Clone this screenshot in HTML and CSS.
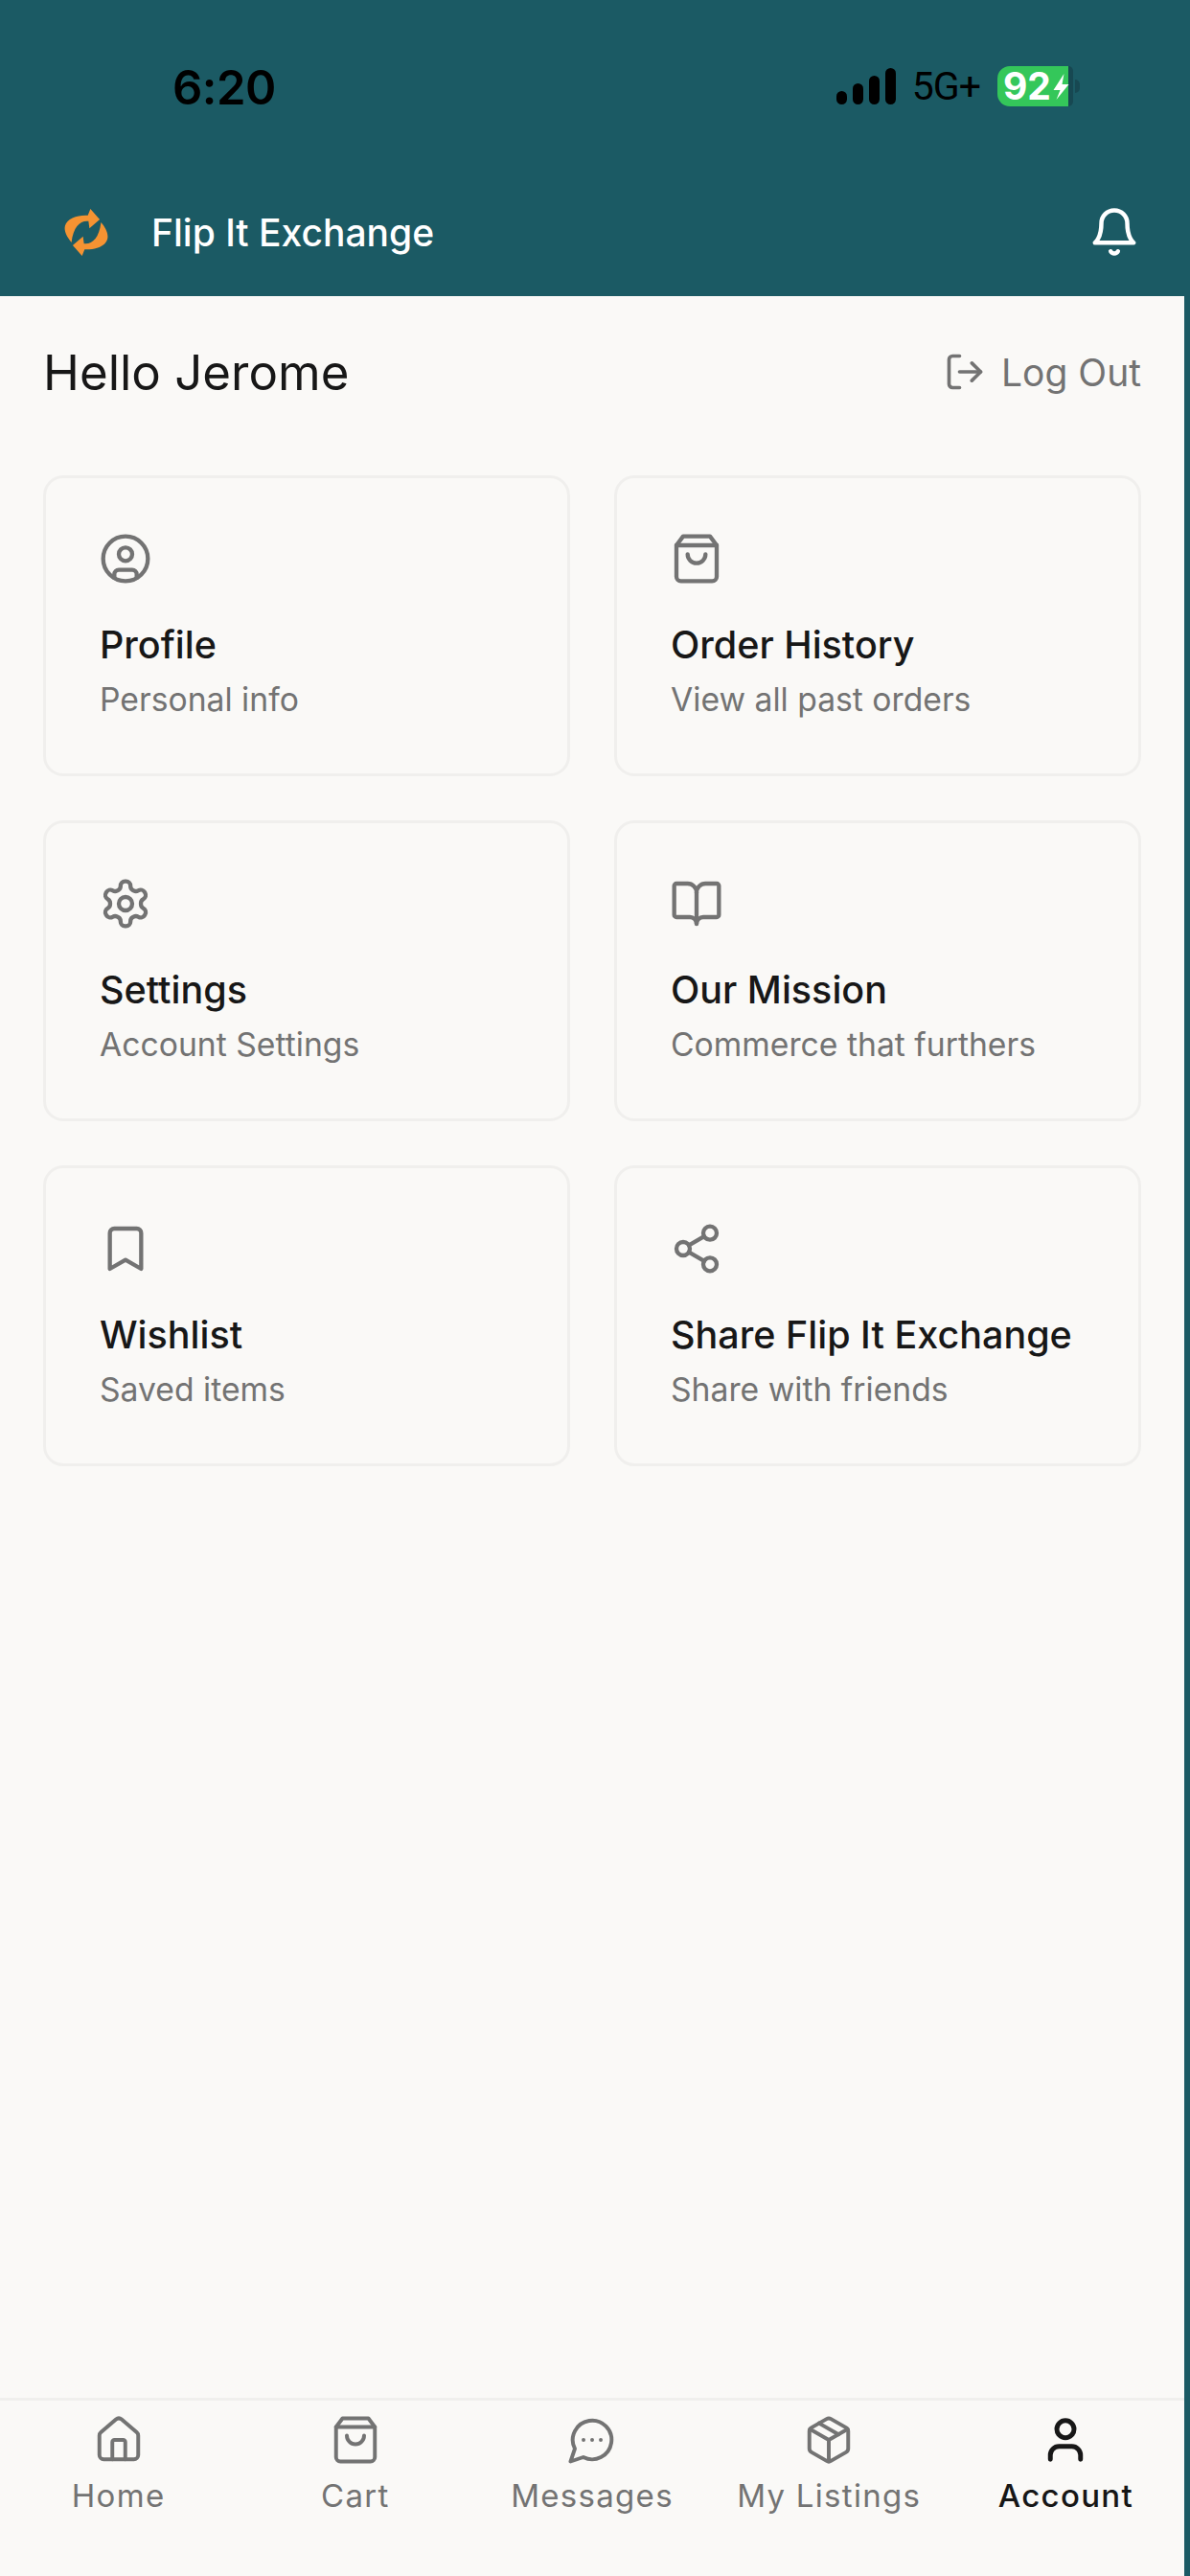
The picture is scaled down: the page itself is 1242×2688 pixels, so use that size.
FILE: index.html
```html
<!DOCTYPE html>
<html>
<head>
    <meta charset="utf-8">
    <title>Flip It Exchange</title>
    <link rel="stylesheet" href="styles.css">
</head>
<body>
    <div class="app">
        <header class="header">
            <div class="status-bar">
                <span class="time">6:20</span>
                <div class="status-right">
                    <div class="signal">
                        <div class="signal-bar signal-1"></div>
                        <div class="signal-bar signal-2"></div>
                        <div class="signal-bar signal-3"></div>
                        <div class="signal-bar signal-4"></div>
                    </div>
                    <span class="network">5G+</span>
                    <div class="battery">
                        <div class="battery-fill">92</div>
                        <div class="battery-rest"></div>
                        <div class="battery-nub"></div>
                        <svg class="battery-bolt" viewBox="0 0 16 28"><polygon points="11,0 0,17 7,17 3,27 16,11 9,11"/></svg>
                    </div>
                </div>
            </div>
            <div class="toolbar">
                <div class="brand">
                    <svg class="logo" viewBox="70 70 160 170">
                        <path d="M163 82 L192 115 L160 142 L157 120 C132 117 110 136 104 186 C90 170 80 150 84 135 C90 110 125 100 155 102 Z"/>
                        <path transform="rotate(180 150 155)" d="M163 82 L192 115 L160 142 L157 120 C132 117 110 136 104 186 C90 170 80 150 84 135 C90 110 125 100 155 102 Z"/>
                    </svg>
                    <span class="brand-name">Flip It Exchange</span>
                </div>
                <svg class="bell" viewBox="0 0 24 24"><path d="M6 8a6 6 0 0 1 12 0c0 7 3 9 3 9H3s3-2 3-9"/><path d="M10.3 21a1.94 1.94 0 0 0 3.4 0"/></svg>
            </div>
        </header>

        <main class="content">
            <div class="greeting-row">
                <h1 class="greeting">Hello Jerome</h1>
                <div class="logout">
                    <svg class="logout-icon" viewBox="0 0 24 24"><path d="M9 21H5a2 2 0 0 1-2-2V5a2 2 0 0 1 2-2h4"/><polyline points="16 17 21 12 16 7"/><line x1="21" y1="12" x2="9" y2="12"/></svg>
                    <span>Log Out</span>
                </div>
            </div>

            <div class="card-grid">
                <div class="card">
                    <svg class="card-icon" viewBox="0 0 24 24"><circle cx="12" cy="12" r="10"/><circle cx="12" cy="10" r="3"/><path d="M7 20.662V19a2 2 0 0 1 2-2h6a2 2 0 0 1 2 2v1.662"/></svg>
                    <div class="card-title">Profile</div>
                    <div class="card-sub">Personal info</div>
                </div>
                <div class="card">
                    <svg class="card-icon" viewBox="0 0 24 24"><path d="M6 2 3 6v14a2 2 0 0 0 2 2h14a2 2 0 0 0 2-2V6l-3-4Z"/><path d="M3 6h18"/><path d="M16 10a4 4 0 0 1-8 0"/></svg>
                    <div class="card-title">Order History</div>
                    <div class="card-sub">View all past orders</div>
                </div>
                <div class="card">
                    <svg class="card-icon" viewBox="0 0 24 24"><path d="M12.22 2h-.44a2 2 0 0 0-2 2v.18a2 2 0 0 1-1 1.73l-.43.25a2 2 0 0 1-2 0l-.15-.08a2 2 0 0 0-2.73.73l-.22.38a2 2 0 0 0 .73 2.73l.15.1a2 2 0 0 1 1 1.72v.51a2 2 0 0 1-1 1.74l-.15.09a2 2 0 0 0-.73 2.73l.22.38a2 2 0 0 0 2.73.73l.15-.08a2 2 0 0 1 2 0l.43.25a2 2 0 0 1 1 1.73V20a2 2 0 0 0 2 2h.44a2 2 0 0 0 2-2v-.18a2 2 0 0 1 1-1.73l.43-.25a2 2 0 0 1 2 0l.15.08a2 2 0 0 0 2.73-.73l.22-.39a2 2 0 0 0-.73-2.73l-.15-.08a2 2 0 0 1-1-1.74v-.5a2 2 0 0 1 1-1.74l.15-.09a2 2 0 0 0 .73-2.73l-.22-.38a2 2 0 0 0-2.73-.73l-.15.08a2 2 0 0 1-2 0l-.43-.25a2 2 0 0 1-1-1.73V4a2 2 0 0 0-2-2z"/><circle cx="12" cy="12" r="3"/></svg>
                    <div class="card-title">Settings</div>
                    <div class="card-sub">Account Settings</div>
                </div>
                <div class="card">
                    <svg class="card-icon" viewBox="0 0 24 24"><path d="M12 7v14"/><path d="M3 18a1 1 0 0 1-1-1V4a1 1 0 0 1 1-1h5a4 4 0 0 1 4 4 4 4 0 0 1 4-4h5a1 1 0 0 1 1 1v13a1 1 0 0 1-1 1h-6a3 3 0 0 0-3 3 3 3 0 0 0-3-3z"/></svg>
                    <div class="card-title">Our Mission</div>
                    <div class="card-sub">Commerce that furthers</div>
                </div>
                <div class="card">
                    <svg class="card-icon" viewBox="0 0 24 24"><path d="m19 21-7-4-7 4V5a2 2 0 0 1 2-2h10a2 2 0 0 1 2 2v16z"/></svg>
                    <div class="card-title">Wishlist</div>
                    <div class="card-sub">Saved items</div>
                </div>
                <div class="card">
                    <svg class="card-icon" viewBox="0 0 24 24"><circle cx="18" cy="5" r="3"/><circle cx="6" cy="12" r="3"/><circle cx="18" cy="19" r="3"/><line x1="8.59" y1="13.51" x2="15.42" y2="17.49"/><line x1="15.41" y1="6.51" x2="8.59" y2="10.49"/></svg>
                    <div class="card-title">Share Flip It Exchange</div>
                    <div class="card-sub">Share with friends</div>
                </div>
            </div>
        </main>

        <nav class="tab-bar">
            <div class="tab">
                <svg class="tab-icon" viewBox="0 0 24 24"><path d="M15 21v-8a1 1 0 0 0-1-1h-4a1 1 0 0 0-1 1v8"/><path d="M3 10a2 2 0 0 1 .709-1.528l7-5.999a2 2 0 0 1 2.582 0l7 5.999A2 2 0 0 1 21 10v9a2 2 0 0 1-2 2H5a2 2 0 0 1-2-2z"/></svg>
                <span>Home</span>
            </div>
            <div class="tab">
                <svg class="tab-icon" viewBox="0 0 24 24"><path d="M6 2 3 6v14a2 2 0 0 0 2 2h14a2 2 0 0 0 2-2V6l-3-4Z"/><path d="M3 6h18"/><path d="M16 10a4 4 0 0 1-8 0"/></svg>
                <span>Cart</span>
            </div>
            <div class="tab">
                <svg class="tab-icon" viewBox="0 0 24 24"><path d="M7.9 20A9 9 0 1 0 4 16.1L2 22Z"/><path d="M8 12h.01"/><path d="M12 12h.01"/><path d="M16 12h.01"/></svg>
                <span>Messages</span>
            </div>
            <div class="tab">
                <svg class="tab-icon" viewBox="0 0 24 24"><path d="M11 21.73a2 2 0 0 0 2 0l7-4A2 2 0 0 0 21 16V8a2 2 0 0 0-1-1.73l-7-4a2 2 0 0 0-2 0l-7 4A2 2 0 0 0 3 8v8a2 2 0 0 0 1 1.73z"/><path d="M12 22V12"/><path d="M3.29 7 12 12l8.71-5"/><path d="m7.5 4.27 9 5.15"/></svg>
                <span>My Listings</span>
            </div>
            <div class="tab tab-active">
                <svg class="tab-icon" viewBox="0 0 24 24"><path d="M19 21v-2a4 4 0 0 0-4-4H9a4 4 0 0 0-4 4v2"/><circle cx="12" cy="7" r="4"/></svg>
                <span>Account</span>
            </div>
        </nav>
    </div>
</body>
</html>
```
FILE: styles.css
```css
* {
    box-sizing: border-box;
}

body {
    margin: 0;
    background: #1b5a64;
    font-family: Inter, "Liberation Sans", sans-serif;
}

.app {
    display: flex;
    flex-direction: column;
    width: 1236px;
    height: 2688px;
    background: #faf9f7;
}

svg {
    flex-shrink: 0;
    fill: none;
    stroke: currentColor;
    stroke-linecap: round;
    stroke-linejoin: round;
}

/* Header */
.header {
    height: 309px;
    background: #1b5a64;
    color: #fff;
}

.status-bar {
    display: flex;
    align-items: center;
    justify-content: space-between;
    height: 180px;
    padding: 0 109px 0 180px;
    color: #000;
}

.time {
    margin-top: 3px;
    font-size: 49px;
    font-weight: 600;
    letter-spacing: -0.5px;
}

.status-right {
    display: flex;
    align-items: center;
}

.signal {
    display: flex;
    align-items: flex-end;
    gap: 6px;
    height: 38px;
}

.signal-bar {
    width: 11px;
    background: #000;
    border-radius: 6px;
}

.signal-1 { height: 14px; }
.signal-2 { height: 22px; }
.signal-3 { height: 30px; }
.signal-4 { height: 38px; }

.network {
    margin: 0 18px 0 17px;
    font-family: Roboto, sans-serif;
    font-size: 41px;
    letter-spacing: -1px;
}

.battery {
    display: flex;
    align-items: center;
    position: relative;
}

.battery-fill {
    width: 74px;
    height: 42px;
    padding-left: 6px;
    background: #34c75a;
    border-radius: 13px 0 0 13px;
    color: #fff;
    font-size: 39px;
    font-weight: 700;
    line-height: 42px;
}

.battery-rest {
    width: 5px;
    height: 42px;
    background: #174852;
    border-radius: 0 8px 8px 0;
}

.battery-nub {
    width: 5px;
    height: 14px;
    margin-left: 2px;
    background: #174852;
    border-radius: 0 5px 5px 0;
}

.battery-bolt {
    position: absolute;
    left: 58px;
    top: 8px;
    width: 17px;
    height: 28px;
    fill: #fff;
    stroke: none;
}

.toolbar {
    display: flex;
    align-items: center;
    justify-content: space-between;
    height: 124px;
    padding: 0 46px 0 63px;
}

.brand {
    display: flex;
    align-items: center;
    gap: 41px;
}

.logo {
    width: 54px;
    height: 57px;
    fill: #f59332;
    stroke: none;
}

.brand-name {
    font-size: 39px;
    font-weight: 500;
}

.bell {
    width: 54px;
    height: 54px;
    stroke-width: 2;
}

/* Main content */
.content {
    flex: 1;
    padding: 43px 45px 0;
}

.greeting-row {
    display: flex;
    align-items: center;
    justify-content: space-between;
    height: 72px;
    margin-bottom: 72px;
}

.greeting {
    margin: 0;
    font-size: 51px;
    font-weight: 400;
    color: #171717;
}

.logout {
    display: flex;
    align-items: center;
    gap: 16px;
    font-size: 39px;
    color: #737373;
}

.logout-icon {
    width: 44px;
    height: 44px;
    stroke-width: 2;
}

.card-grid {
    display: grid;
    grid-template-columns: 1fr 1fr;
    gap: 46px;
}

.card {
    height: 314px;
    padding: 54px 56px;
    border: 3px solid #f0efed;
    border-radius: 21px;
}

.card-icon {
    display: block;
    width: 56px;
    height: 56px;
    margin: 2px 0 2px -1px;
    stroke-width: 1.85;
    color: #737373;
}

.card-title {
    margin-top: 38px;
    font-size: 39.5px;
    font-weight: 500;
    line-height: 48px;
    color: #171717;
}

.card-sub {
    margin-top: 11px;
    font-size: 33.7px;
    line-height: 44px;
    color: #737373;
}

/* Bottom tabs */
.tab-bar {
    display: flex;
    height: 186px;
    padding-top: 14px;
    border-top: 3px solid #f0efed;
}

.tab {
    display: flex;
    flex: 1;
    flex-direction: column;
    align-items: center;
    gap: 11px;
    font-size: 33px;
    line-height: 40px;
    letter-spacing: 1.3px;
    color: #737373;
}

.tab-icon {
    width: 54px;
    height: 54px;
    stroke-width: 1.75;
}

.tab-active {
    color: #171717;
    font-weight: 500;
}

.tab-active .tab-icon {
    stroke-width: 2.2;
}
```
